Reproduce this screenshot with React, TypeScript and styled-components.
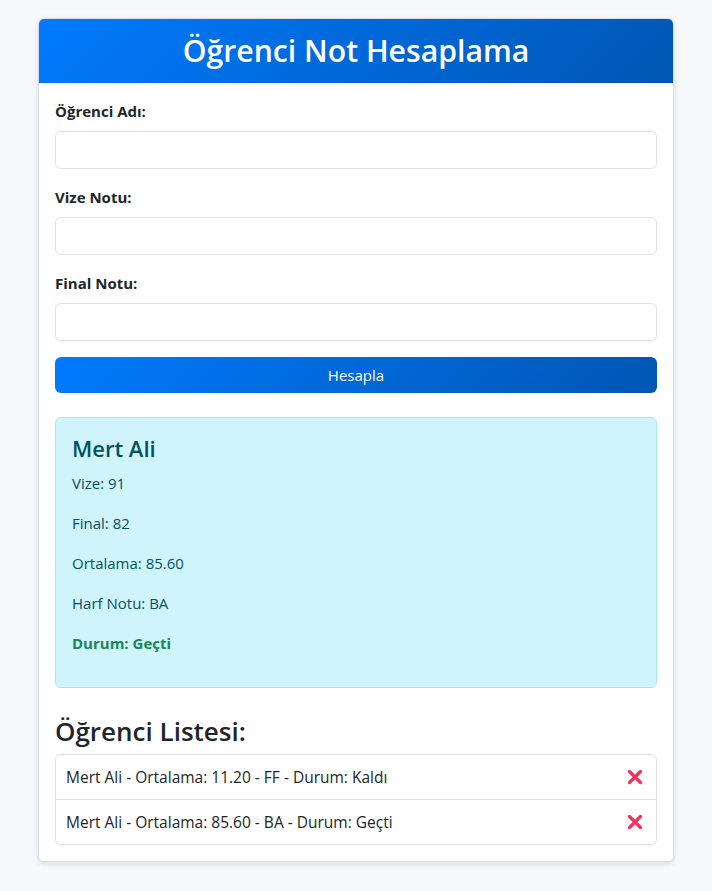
import React from "react";
import styled, { createGlobalStyle } from "styled-components";

const Global = createGlobalStyle`
  * { box-sizing: border-box; }
  html, body { margin: 0; padding: 0; }
  body {
    background: #f8f9fa;
    font-family: "Open Sans", "Noto Sans", sans-serif;
    color: #212529;
    font-size: 16px;
    line-height: 1.5;
  }
`;

const Card = styled.div`
  width: 636px;
  margin: 18px auto 30px;
  background: #fff;
  border: 1px solid #dcdfe3;
  border-radius: 6px;
  box-shadow: 0 2px 6px rgba(0, 0, 0, 0.12);
  overflow: hidden;
`;

const Header = styled.div`
  background: linear-gradient(135deg, #007bff, #0056b3);
  color: #fff;
  text-align: center;
  padding: 13px 16px;
`;

const Title = styled.h2`
  margin: 0;
  font-size: 30.2px;
  font-weight: 600;
  line-height: 38px;
`;

const Body = styled.div`
  padding: 16px;
`;

const Group = styled.div`
  margin-bottom: 16px;
`;

const Label = styled.label`
  display: block;
  font-weight: 700;
  font-size: 15px;
  line-height: 24px;
  margin-bottom: 8px;
`;

const Input = styled.input`
  display: block;
  width: 100%;
  height: 38px;
  border: 1px solid #dee2e6;
  border-radius: 6px;
  padding: 6px 12px;
  font: inherit;
  background: #fff;
`;

const Button = styled.button`
  display: block;
  width: 100%;
  height: 36px;
  border: none;
  border-radius: 6px;
  background: linear-gradient(135deg, #007bff, #0056b3);
  color: #fff;
  font-family: inherit;
  font-size: 15px;
`;

const Alert = styled.div`
  margin-top: 24px;
  background: #cff4fc;
  border: 1px solid #9eeaf9;
  border-radius: 6px;
  padding: 16px;
  color: #055160;
`;

const Name = styled.h4`
  margin: 0 0 8px;
  font-size: 22px;
  font-weight: 600;
  line-height: 29px;
`;

const Line = styled.p<{ $status?: boolean }>`
  margin: 0 0 16px;
  font-size: 15px;
  line-height: 24px;
  font-weight: ${(p) => (p.$status ? 700 : 400)};
  color: ${(p) => (p.$status ? "#198754" : "inherit")};
`;

const ListTitle = styled.h3`
  margin: 26px 0 6px;
  font-size: 26px;
  font-weight: 600;
  line-height: 34px;
`;

const List = styled.ul`
  list-style: none;
  margin: 0;
  padding: 0;
  border: 1px solid #dee2e6;
  border-radius: 6px;
`;

const Item = styled.li`
  display: flex;
  align-items: center;
  justify-content: space-between;
  padding: 10px 12px 10px 10px;
  font-size: 15.5px;
  line-height: 24px;
  & + & {
    border-top: 1px solid #dee2e6;
  }
`;

const Remove = styled.button`
  border: none;
  background: none;
  padding: 0;
  margin-right: 1px;
  display: flex;
  cursor: pointer;
`;

const XIcon = () => (
  <svg width="16" height="16" viewBox="0 0 16 16">
    <path d="M2.5 2.5 L13.5 13.5 M13.5 2.5 L2.5 13.5" stroke="#f4305d" strokeWidth="3.2" strokeLinecap="round" />
  </svg>
);

const students = [
  "Mert Ali - Ortalama: 11.20 - FF - Durum: Kaldı",
  "Mert Ali - Ortalama: 85.60 - BA - Durum: Geçti",
];

export default function App() {
  return (
    <>
      <Global />
      <Card>
        <Header>
          <Title>Öğrenci Not Hesaplama</Title>
        </Header>
        <Body>
          <Group>
            <Label>Öğrenci Adı:</Label>
            <Input type="text" />
          </Group>
          <Group>
            <Label>Vize Notu:</Label>
            <Input type="number" />
          </Group>
          <Group>
            <Label>Final Notu:</Label>
            <Input type="number" />
          </Group>
          <Button>Hesapla</Button>
          <Alert>
            <Name>Mert Ali</Name>
            <Line>Vize: 91</Line>
            <Line>Final: 82</Line>
            <Line>Ortalama: 85.60</Line>
            <Line>Harf Notu: BA</Line>
            <Line $status>Durum: Geçti</Line>
          </Alert>
          <ListTitle>Öğrenci Listesi:</ListTitle>
          <List>
            {students.map((s, i) => (
              <Item key={i}>
                <span>{s}</span>
                <Remove aria-label="Sil">
                  <XIcon />
                </Remove>
              </Item>
            ))}
          </List>
        </Body>
      </Card>
    </>
  );
}
